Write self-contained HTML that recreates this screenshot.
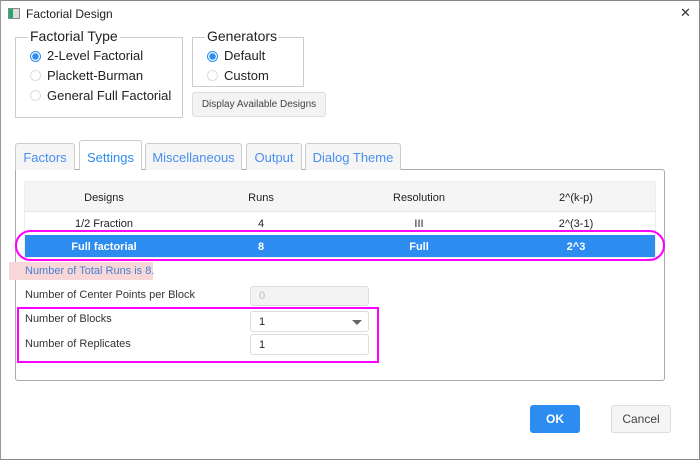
<!DOCTYPE html>
<html><head><style>
*{box-sizing:border-box;margin:0;padding:0}
body{width:700px;height:460px;background:#fff;position:relative;overflow:hidden;font-family:"Liberation Sans",Arial,sans-serif;color:#222}
.a{position:absolute}
.frame{left:0;top:0;width:700px;height:460px;border:1px solid #888;border-left-color:#999}
.gb{border:1px solid #ccc}
.leg{background:#fff;font-size:14px;padding:0 2px;line-height:14px}
.rad{width:11px;height:11px;border-radius:50%;border:1px solid #ddd;background:#fff}
.rad.on{border:1px solid #2d8cf0;background:radial-gradient(circle,#2d8cf0 0 3px,#fff 3.5px)}
.rt{font-size:13px;line-height:14px}
.tab{top:143px;height:27px;border:1px solid #ccc;border-bottom:none;border-radius:3px 3px 0 0;background:#f5f5f5;color:#4a8ef0;font-size:13px;text-align:center;line-height:27px}
.cell{font-size:11px;text-align:center;line-height:14px}
.sel{color:#fff;font-weight:bold}
.lbl{font-size:11px;line-height:13px;color:#333}
.inp{border:1px solid #ddd;border-radius:3px;background:#fff;font-size:11px;padding-left:8px}
</style></head><body>
<div class="a frame"></div>
<div class="a" style="left:8px;top:8px;width:12px;height:11px;border:1px solid #888;background:linear-gradient(90deg,#2a6 0 40%,#ddd 40%)"></div>
<div class="a" style="left:26px;top:7px;font-size:12px;color:#222">Factorial Design</div>
<div class="a" style="left:680px;top:5px;font-size:13px;color:#333">✕</div>

<div class="a gb" style="left:15px;top:37px;width:168px;height:81px"></div>
<div class="a leg" style="left:28px;top:29px">Factorial Type</div>
<div class="a rad on" style="left:30px;top:51px"></div><div class="a rt" style="left:47px;top:49px">2-Level Factorial</div>
<div class="a rad" style="left:30px;top:70px"></div><div class="a rt" style="left:47px;top:69px">Plackett-Burman</div>
<div class="a rad" style="left:30px;top:90px"></div><div class="a rt" style="left:47px;top:89px">General Full Factorial</div>

<div class="a gb" style="left:192px;top:37px;width:112px;height:50px"></div>
<div class="a leg" style="left:205px;top:29px">Generators</div>
<div class="a rad on" style="left:207px;top:51px"></div><div class="a rt" style="left:224px;top:49px">Default</div>
<div class="a rad" style="left:207px;top:70px"></div><div class="a rt" style="left:224px;top:69px">Custom</div>
<div class="a" style="left:192px;top:92px;width:134px;height:25px;border:1px solid #ddd;border-radius:3px;background:#f3f3f3;font-size:10px;color:#444;text-align:center;line-height:23px">Display Available Designs</div>

<div class="a" style="left:15px;top:169px;width:650px;height:212px;border:1px solid #aaa;border-radius:0 3px 3px 3px"></div>
<div class="a tab" style="left:15px;width:60px">Factors</div>
<div class="a tab" style="left:79px;width:63px;top:140px;height:30px;background:#fff;line-height:34px;color:#2d8cf0">Settings</div>
<div class="a tab" style="left:145px;width:97px">Miscellaneous</div>
<div class="a tab" style="left:246px;width:56px">Output</div>
<div class="a tab" style="left:305px;width:96px">Dialog Theme</div>

<div class="a" style="left:24px;top:181px;width:632px;height:77px;border:1px solid #eee"></div>
<div class="a" style="left:25px;top:182px;width:630px;height:30px;background:#f5f5f5;border-bottom:1px solid #e5e5e5"></div>
<div class="a cell" style="left:44px;top:191px;width:120px">Designs</div>
<div class="a cell" style="left:221px;top:191px;width:80px">Runs</div>
<div class="a cell" style="left:369px;top:191px;width:100px">Resolution</div>
<div class="a cell" style="left:526px;top:191px;width:100px">2^(k-p)</div>
<div class="a cell" style="left:44px;top:217px;width:120px">1/2 Fraction</div>
<div class="a cell" style="left:221px;top:217px;width:80px">4</div>
<div class="a cell" style="left:369px;top:217px;width:100px">III</div>
<div class="a cell" style="left:526px;top:217px;width:100px">2^(3-1)</div>
<div class="a" style="left:25px;top:235px;width:630px;height:22px;background:#2d8cf0"></div>
<div class="a cell sel" style="left:44px;top:240px;width:120px">Full factorial</div>
<div class="a cell sel" style="left:221px;top:240px;width:80px">8</div>
<div class="a cell sel" style="left:369px;top:240px;width:100px">Full</div>
<div class="a cell sel" style="left:526px;top:240px;width:100px">2^3</div>
<div class="a" style="left:15px;top:230px;width:650px;height:31px;border:2px solid #f0f;border-radius:16px"></div>

<div class="a" style="left:9px;top:262px;width:144px;height:18px;background:#f8d7d9"></div>
<div class="a lbl" style="left:25px;top:265px;color:#4a7fcf;font-size:11px">Number of Total Runs is 8.</div>
<div class="a lbl" style="left:25px;top:289px">Number of Center Points per Block</div>
<div class="a inp" style="left:250px;top:286px;width:119px;height:20px;background:#f3f3f3;color:#bbb;line-height:18px">0</div>
<div class="a" style="left:17px;top:307px;width:362px;height:56px;border:2px solid #f0f"></div>
<div class="a lbl" style="left:25px;top:313px">Number of Blocks</div>
<div class="a inp" style="left:250px;top:311px;width:119px;height:21px;line-height:20px">1</div>
<div class="a" style="left:352px;top:320px;width:0;height:0;border-left:5px solid transparent;border-right:5px solid transparent;border-top:5px solid #666"></div>
<div class="a lbl" style="left:25px;top:338px">Number of Replicates</div>
<div class="a inp" style="left:250px;top:334px;width:119px;height:21px;line-height:20px">1</div>

<div class="a" style="left:530px;top:405px;width:50px;height:28px;background:#2d8cf0;border-radius:3px;color:#fff;font-size:12px;font-weight:bold;text-align:center;line-height:28px">OK</div>
<div class="a" style="left:611px;top:405px;width:60px;height:28px;background:#f5f5f5;border:1px solid #ddd;border-radius:3px;color:#444;font-size:12px;text-align:center;line-height:26px">Cancel</div>
</body></html>
